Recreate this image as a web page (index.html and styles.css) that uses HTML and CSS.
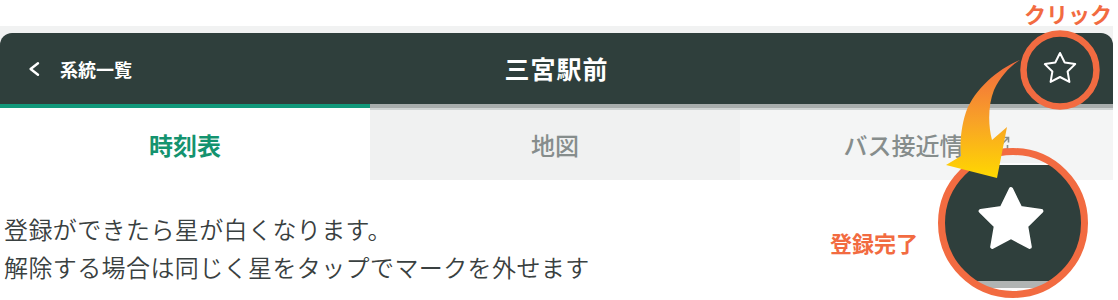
FILE: index.html
```html
<!DOCTYPE html>
<html lang="ja">
<head>
<meta charset="utf-8">
<title>三宮駅前</title>
<link rel="stylesheet" href="styles.css">
</head>
<body>
<div class="page">
  <div class="frame">
    <header class="header">
      <a class="back">
        <svg class="chev" width="12" height="16" viewBox="0 0 12 16"><path d="M10 2.2 L2.6 8 L10 13.8" fill="none" stroke="#fff" stroke-width="2.4" stroke-linecap="round" stroke-linejoin="round"/></svg>
        <span>系統一覧</span>
      </a>
      <h1 class="title">三宮駅前</h1>
      <div class="fav">
        <svg width="40" height="40" viewBox="0 0 40 40"><path d="M20 4 L24.7 13.5 L35.2 15.1 L27.6 22.5 L29.4 32.9 L20 28 L10.6 32.9 L12.4 22.5 L4.8 15.1 L15.3 13.5 Z" fill="none" stroke="#fff" stroke-width="2" stroke-linejoin="round"/></svg>
      </div>
    </header>
    <nav class="tabs">
      <div class="tab active">時刻表</div>
      <div class="tab">地図</div>
      <div class="tab third">バス接近情報<svg class="ext" width="16" height="16" viewBox="0 0 16 16"><path d="M7 2.5H2.5v11h11V9" fill="none" stroke="currentColor" stroke-width="1.6"/><path d="M9.5 1.5h5v5M14.5 1.5L7.5 8.5" fill="none" stroke="currentColor" stroke-width="1.6"/></svg></div>
    </nav>
  </div>
  <div class="content">
    <p>登録ができたら星が白くなります。</p>
    <p>解除する場合は同じく星をタップでマークを外せます</p>
  </div>
  <svg class="overlay" width="1118" height="300" viewBox="0 0 1118 300">
    <defs>
      <clipPath id="lens"><circle cx="1013" cy="223" r="72"/></clipPath>
      <linearGradient id="arrowGrad" x1="0" y1="60" x2="0" y2="178" gradientUnits="userSpaceOnUse">
        <stop offset="0" stop-color="#f2693f"/>
        <stop offset="0.5" stop-color="#f8a028"/>
        <stop offset="1" stop-color="#ffd800"/>
      </linearGradient>
    </defs>
    <circle cx="1060" cy="70" r="36.5" fill="none" stroke="#f26b41" stroke-width="6.5"/>
    <g clip-path="url(#lens)">
      <rect x="930" y="140" width="170" height="170" fill="#fbfbfb"/>
      <rect x="930" y="140" width="170" height="23" fill="#f1f2f2"/>
      <rect x="930" y="165" width="170" height="116" fill="#2f3f3c"/>
      <rect x="930" y="281" width="170" height="7" fill="#b0b4b3"/>
      <path d="M1011 189 L1020.4 208.1 L1041.4 211.1 L1026.2 226 L1029.8 246.9 L1011 237 L992.2 246.9 L995.8 226 L980.6 211.1 L1001.6 208.1 Z" fill="#fff" stroke="#fff" stroke-width="4" stroke-linejoin="round"/>
    </g>
    <circle cx="1013" cy="223" r="71.5" fill="none" stroke="#f26b41" stroke-width="7"/>
    <path d="M1020 60 C1000 68 975 88 966 112 C960 130 960 148 961 156 L946 165 L997 178 L1007 127 L992 140 C988 125 988 105 994 90 C1000 77 1010 66 1020 60 Z" fill="url(#arrowGrad)"/>
  </svg>
  <div class="label click">クリック</div>
  <div class="label done">登録完了</div>
</div>
</body>
</html>
```

FILE: styles.css
```css
* { box-sizing: border-box; }
html, body { margin: 0; padding: 0; }
body {
  background: #fff;
  font-family: "Noto Sans CJK JP", "Noto Sans", sans-serif;
  width: 1118px;
  height: 300px;
  overflow: hidden;
}
.page {
  position: relative;
  width: 1118px;
  height: 300px;
  padding-top: 26px;
}
.frame {
  width: 1113px;
  background: #f1f2f2;
  padding-top: 7px;
}
.header {
  height: 71px;
  background: #2f3f3c;
  border-radius: 12px 12px 0 0;
  display: grid;
  grid-template-columns: 1fr auto 1fr;
  align-items: center;
  color: #fff;
}
.back {
  display: flex;
  align-items: center;
  gap: 20px;
  padding-left: 28px;
  font-size: 18px;
  font-weight: 700;
  color: #fff;
  text-decoration: none;
}
.chev { display: block; }
.title {
  margin: 0;
  font-size: 25px;
  font-weight: 700;
  letter-spacing: 1px;
  line-height: 1;
}
.fav { justify-self: end; margin-right: 33px; display: flex; }
.tabs {
  display: grid;
  grid-template-columns: 370px 370px 1fr;
  height: 76px;
}
.tab {
  display: flex;
  align-items: center;
  justify-content: center;
  font-size: 24px;
  font-weight: 500;
  color: #868d8c;
  border-top: 4px solid #a8adac;
  background: linear-gradient(#d0d4d3 0, #d0d4d3 2px, #f0f1f1 2px);
}
.tab.active {
  color: #14936f;
  font-weight: 700;
  border-top-color: #12987a;
  background: #fff;
}
.tab.third {
  background: linear-gradient(#d0d4d3 0, #d0d4d3 2px, #f4f5f5 2px);
  gap: 6px;
}
.ext { display: block; }
.content {
  padding: 30px 0 0 4px;
  color: #394040;
  font-size: 24px;
  font-weight: 350;
  line-height: 38px;
  letter-spacing: 0.4px;
}
.content p { margin: 0; }
.overlay {
  position: absolute;
  left: 0;
  top: 0;
  pointer-events: none;
}
.label {
  position: absolute;
  color: #f26b41;
  font-weight: 700;
  font-size: 22px;
  line-height: 26px;
  white-space: nowrap;
}
.click { left: 1024px; top: 0; }
.done { left: 830px; top: 229px; }
```
